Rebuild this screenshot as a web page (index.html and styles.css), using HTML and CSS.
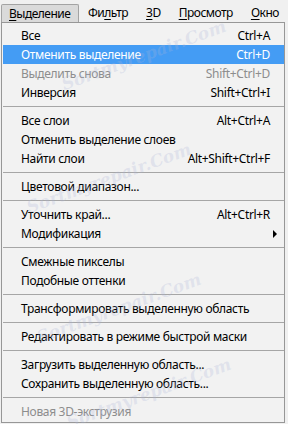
FILE: index.html
```html
<!DOCTYPE html>
<html>
<head>
<meta charset="utf-8">
<link rel="stylesheet" href="styles.css">
</head>
<body>
<div class="app">
  <div class="menubar">
    <div class="top open"><u>В</u>ыделение</div>
    <div class="top">Фи<u>л</u>ьтр</div>
    <div class="top"><u>3</u>D</div>
    <div class="top"><u>П</u>росмотр</div>
    <div class="top"><u>О</u>кно</div>
  </div>
  <div class="dropdown">
    <div class="item"><span>Все</span><span>Ctrl+A</span></div>
    <div class="item active"><span>Отменить выделение</span><span>Ctrl+D</span></div>
    <div class="item disabled"><span>Выделить снова</span><span>Shift+Ctrl+D</span></div>
    <div class="item"><span>Инверсия</span><span>Shift+Ctrl+I</span></div>
    <div class="sep"></div>
    <div class="item"><span>Все слои</span><span>Alt+Ctrl+A</span></div>
    <div class="item"><span>Отменить выделение слоев</span></div>
    <div class="item"><span>Найти слои</span><span>Alt+Shift+Ctrl+F</span></div>
    <div class="sep"></div>
    <div class="item"><span>Цветовой диапазон...</span></div>
    <div class="sep"></div>
    <div class="item"><span>Уточнить край...</span><span>Alt+Ctrl+R</span></div>
    <div class="item sub"><span>Модификация</span><span class="arrow"></span></div>
    <div class="sep"></div>
    <div class="item"><span>Смежные пикселы</span></div>
    <div class="item"><span>Подобные оттенки</span></div>
    <div class="sep"></div>
    <div class="item"><span>Трансформировать выделенную область</span></div>
    <div class="sep"></div>
    <div class="item"><span>Редактировать в режиме быстрой маски</span></div>
    <div class="sep"></div>
    <div class="item"><span>Загрузить выделенную область...</span></div>
    <div class="item"><span>Сохранить выделенную область...</span></div>
    <div class="sep"></div>
    <div class="item disabled"><span>Новая 3D-экструзия</span></div>
    <div class="wm wm1">Sortmyrepair.Com</div>
    <div class="wm wm2">Sortmyrepair.Com</div>
    <div class="wm wm3">Sortmyrepair.Com</div>
    <div class="wm wm4">Sortmyrepair.Com</div>
  </div>
</div>
</body>
</html>
```

FILE: styles.css
```css
html, body {
  margin: 0;
  padding: 0;
  background: #f0f0f0;
}
.app {
  width: 288px;
  height: 424px;
  font-family: "Noto Sans", "Open Sans", sans-serif;
  font-size: 12px;
  letter-spacing: -0.32px;
  color: #000;
  overflow: hidden;
}
.menubar {
  height: 22px;
  display: flex;
  align-items: flex-end;
  padding-left: 1px;
}
.top {
  height: 18px;
  line-height: 17px;
  padding: 0 9px;
  letter-spacing: -0.5px;
  box-sizing: border-box;
  white-space: nowrap;
}
.top u { text-decoration: underline; text-underline-offset: 2px; }
.top.open {
  background: #dadada;
  border: 1px solid #a3a3a3;
  border-bottom: none;
  border-radius: 2px 2px 0 0;
  width: 78px;
  padding: 0 7px;
  margin-right: 0;
}
.dropdown {
  position: relative;
  margin-left: 1px;
  width: 284px;
  box-sizing: border-box;
  border: 1px solid #979797;
  background: #f2f2f2;
  padding: 3px 0 1px 1px;
  height: 401px;
}
.item {
  height: 19px;
  display: flex;
  align-items: center;
  justify-content: space-between;
  padding: 0 14px 0 18px;
  white-space: nowrap;
}
.item.active {
  background: #449cf4;
  color: #fff;
}
.item.disabled {
  color: #8d8d8d;
}
.sep {
  height: 9px;
  display: flex;
  align-items: center;
}
.sep::before {
  content: "";
  display: block;
  width: 100%;
  height: 1px;
  background: #a6a6a6;
}
.arrow {
  width: 0;
  height: 0;
  border-top: 4px solid transparent;
  border-bottom: 4px solid transparent;
  border-left: 4px solid #000;
  margin-right: -7px;
}
.wm {
  position: absolute;
  font-family: "DejaVu Serif", serif;
  font-style: italic;
  font-weight: bold;
  font-size: 17px;
  letter-spacing: 0;
  color: rgba(170, 180, 215, 0.26);
  transform: rotate(-20deg);
  pointer-events: none;
  white-space: nowrap;
}
.wm1 { left: 55px; top: 22px; }
.wm2 { left: 20px; top: 145px; }
.wm3 { left: 30px; top: 275px; }
.wm4 { left: 60px; top: 360px; }
```
